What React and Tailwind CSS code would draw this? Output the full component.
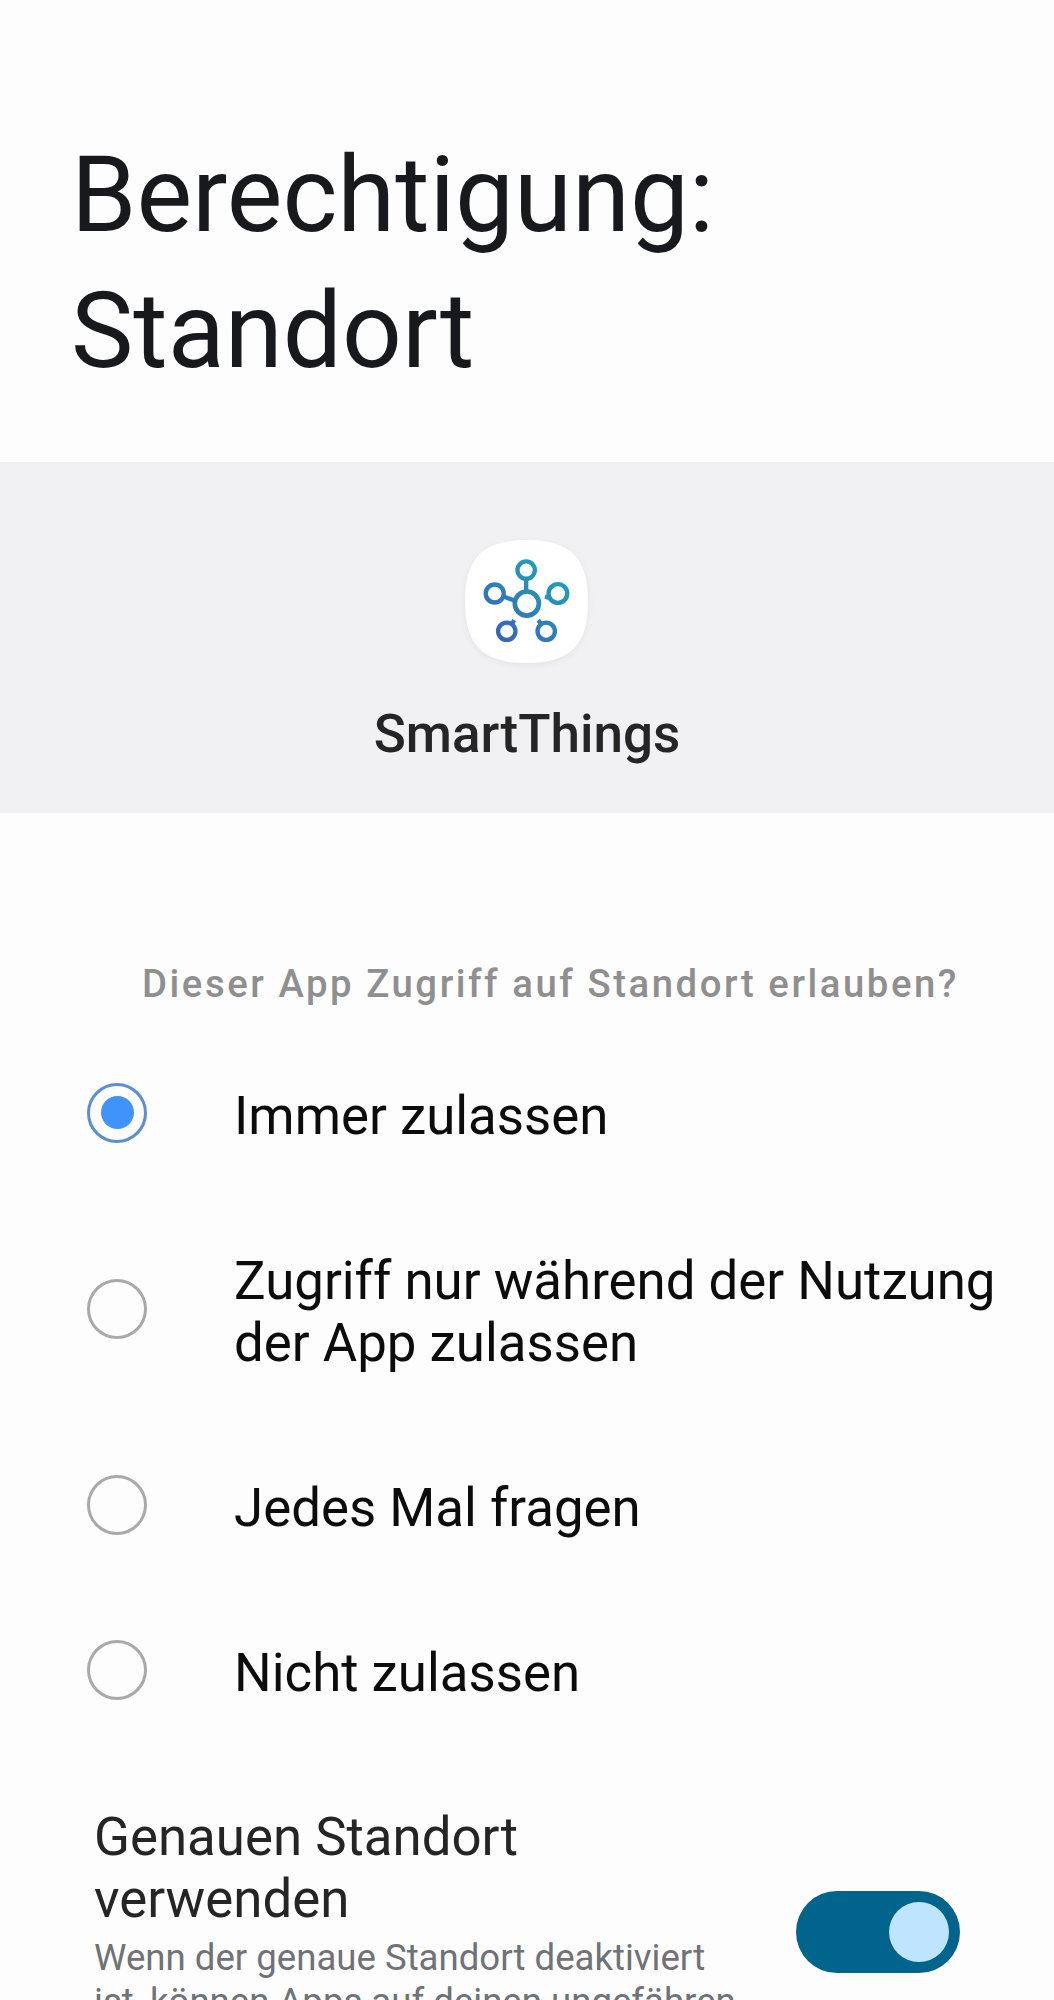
import React from "react";

function AppIcon() {
  return (
    <svg width="123" height="123" viewBox="195 122 368 368" className="block" style={{ filter: "drop-shadow(0 2px 3px rgba(0,0,0,0.05))" }}>
      <defs>
        <linearGradient id="g" gradientUnits="userSpaceOnUse" x1="290" y1="430" x2="480" y2="190">
          <stop offset="0" stopColor="#3a5fb8" />
          <stop offset="0.5" stopColor="#2a86bb" />
          <stop offset="1" stopColor="#1ca6b4" />
        </linearGradient>
      </defs>
      <path d="M379 122C510 122 563 175 563 306C563 437 510 490 379 490C248 490 195 437 195 306C195 175 248 122 379 122Z" fill="#ffffff" />
      <g fill="none" stroke="url(#g)" strokeWidth="13">
        <circle cx="378" cy="212" r="26" />
        <circle cx="284" cy="282" r="27" />
        <circle cx="473" cy="282" r="28" />
        <circle cx="320" cy="395" r="26" />
        <circle cx="438" cy="395" r="26" />
        <circle cx="380" cy="312" r="36" strokeWidth="14" />
        <path d="M378 240V276M312 292L346 304M434 292L446 294M342 362L336 372M414 362L422 372" />
      </g>
    </svg>
  );
}

function Radio({ checked }) {
  return checked ? (
    <span className="flex h-[60px] w-[60px] shrink-0 items-center justify-center rounded-full border-[3px] border-[#5b8fd0]">
      <span className="h-[33px] w-[33px] rounded-full bg-[#4093fb]" />
    </span>
  ) : (
    <span className="block h-[60px] w-[60px] shrink-0 rounded-full border-[3px] border-[#a9a9a9]" />
  );
}

function Option({ checked, children }) {
  return (
    <div className="flex items-center py-[48.5px] pl-[87px] pr-[20px]">
      <Radio checked={checked} />
      <span className="ml-[87px] whitespace-nowrap pt-[6px] text-[52.8px] leading-[62px] text-[#0c0c0c]">{children}</span>
    </div>
  );
}

export default function App() {
  return (
    <div className="h-[2000px] overflow-hidden bg-[#fdfdfd] font-['Roboto',sans-serif]">
      <h1 className="pl-[71px] pr-[40px] pb-[62px] pt-[128px] text-[105px] font-normal leading-[136px] text-[#17191c]">
        Berechtigung:
        <br />
        Standort
      </h1>
      <section className="flex h-[351px] flex-col items-center bg-[#f1f1f3] pt-[78px]">
        <div className="-translate-x-px">
          <AppIcon />
        </div>
        <div className="mt-[40px] text-[53px] font-medium leading-[62px] text-[#252525]">SmartThings</div>
      </section>
      <p className="whitespace-nowrap pl-[142px] pt-[150px] pb-[25px] text-[38.3px] font-medium leading-[42px] tracking-[2.55px] text-[#8f8f8f]">
        Dieser App Zugriff auf Standort erlauben?
      </p>
      <Option checked>Immer zulassen</Option>
      <Option>
        Zugriff nur während der Nutzung
        <br />
        der App zulassen
      </Option>
      <Option>Jedes Mal fragen</Option>
      <Option>Nicht zulassen</Option>
      <div className="flex items-start pl-[94px] pt-[54px]">
        <div className="w-[660px]">
          <div className="text-[52.8px] leading-[62px] text-[#252525]">
            Genauen Standort
            <br />
            verwenden
          </div>
          <div className="mt-[6px] whitespace-nowrap text-[36.6px] leading-[44px] text-[#6f7276]">
            Wenn der genaue Standort deaktiviert
            <br />
            ist, können Apps auf deinen ungefähren
          </div>
        </div>
        <div className="ml-[42px] mt-[85px] flex h-[82px] w-[164px] items-center justify-end rounded-full bg-[#00648c] pr-[11px]">
          <span className="h-[60px] w-[60px] rounded-full bg-[#bee5fd]" />
        </div>
      </div>
    </div>
  );
}
